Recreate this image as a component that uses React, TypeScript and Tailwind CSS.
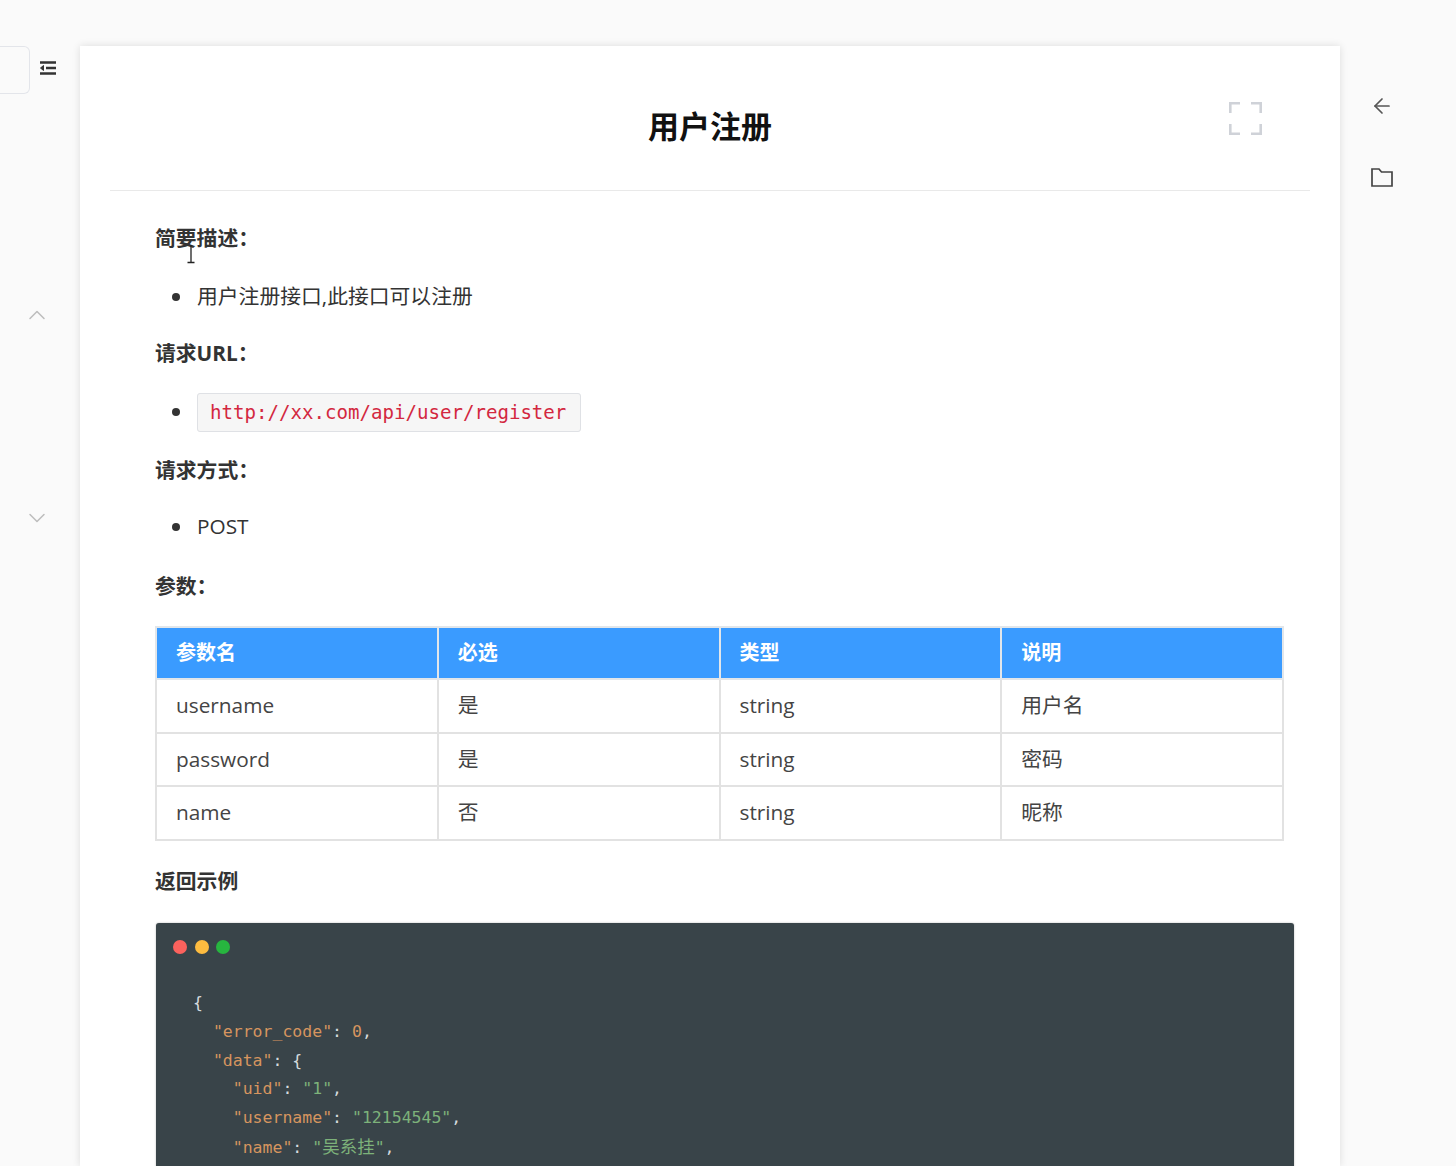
import React from 'react';
import { ArrowLeft, ChevronDown, ChevronUp } from 'lucide-react';

const bodyFont = "font-['Open_Sans','Noto_Sans_CJK_SC',sans-serif]";
const monoFont = "font-['DejaVu_Sans_Mono','Noto_Sans_CJK_SC',monospace]";

const params = [
  { name: 'username', required: '是', type: 'string', note: '用户名', height: 'h-[54px]' },
  { name: 'password', required: '是', type: 'string', note: '密码', height: 'h-[53px]' },
  { name: 'name', required: '否', type: 'string', note: '昵称', height: 'h-[54px]' },
];

const Heading = ({ children }: { children: React.ReactNode }) => (
  <p className="mb-[23px] text-[20.8px] leading-[35px] font-bold text-[#333]">{children}</p>
);

const Bullet = ({ children, className }: { children: React.ReactNode; className: string }) => (
  <ul className={`text-[20.8px] text-[#333] ${className}`}>
    <li className="flex items-center">
      <span className="mr-[17px] ml-[17px] h-[8px] w-[8px] shrink-0 rounded-full bg-[#333]" />
      <span>{children}</span>
    </li>
  </ul>
);

const Key = ({ children }: { children: React.ReactNode }) => <span className="text-[#d6955f]">{children}</span>;
const Str = ({ children }: { children: React.ReactNode }) => <span className="text-[#7db27a]">{children}</span>;

const App = () => {
  return (
    <div className={`flex h-[1166px] overflow-hidden bg-[#fafafa] ${bodyFont}`}>
      {/* left rail */}
      <aside className="flex w-[80px] shrink-0 flex-col pt-[46px]">
        <div className="flex items-start">
          <div className="h-[48px] w-[30px] rounded-r-[6px] border border-l-0 border-[#e3e5ea] bg-[#fafafa]" />
          <svg className="mt-[13px] ml-[9px] h-[18px] w-[18px]" viewBox="0 0 18 18" fill="none" stroke="#333" strokeWidth="2.6">
            <path d="M1 3.5h16M7 9h10M1 14.5h16" />
            <path d="M4.5 6.5 1.5 9l3 2.5z" fill="#333" strokeWidth="1" />
          </svg>
        </div>
        <ChevronUp className="mt-[207px] ml-[23px] h-[28px] w-[28px] text-[#bdbdbd]" strokeWidth={1.3} />
        <ChevronDown className="mt-[175px] ml-[23px] h-[28px] w-[28px] text-[#bdbdbd]" strokeWidth={1.3} />
      </aside>

      {/* document */}
      <main className="relative mt-[46px] w-[1260px] shrink-0 bg-white px-[30px] shadow-[0_0_8px_rgba(0,0,0,0.12)]">
        <header className="grid h-[145px] grid-cols-[1fr_auto_1fr] items-center border-b border-[#e9e9e9]">
          <div />
          <h1 className="mt-[17px] text-[31px] font-bold text-[#111]">用户注册</h1>
          <svg className="mr-[48px] h-[33px] w-[33px] justify-self-end" viewBox="0 0 33 33" fill="none" stroke="#cfd2d8" strokeWidth="2.6">
            <path d="M1.3 11V1.3H11M22 1.3h9.7V11M1.3 22v9.7H11M22 31.7h9.7V22" />
          </svg>
        </header>

        <section className="pl-[45px] pt-[30px]">
          <Heading>简要描述：</Heading>
          <Bullet className="mb-[22px] leading-[35px]">用户注册接口,此接口可以注册</Bullet>
          <Heading>请求URL：</Heading>
          <Bullet className="mb-[23px] leading-[34px]">
            <code className={`rounded-[3px] border border-[#dfe1e5] bg-[#f6f6f6] py-[7px] pr-[14px] pl-[12px] text-[19.1px] text-[#d3283f] ${monoFont}`}>
              http://xx.com/api/user/register
            </code>
          </Bullet>
          <Heading>请求方式：</Heading>
          <Bullet className="-mt-[2px] mb-[25px] leading-[35px]">POST</Bullet>
          <Heading>参数：</Heading>

          <table className="-mt-px mb-[23px] w-[1129px] table-fixed border-collapse text-[20.8px] text-[#444]">
            <thead>
              <tr className="h-[52px] bg-[#3a9bff] text-left text-white">
                {['参数名', '必选', '类型', '说明'].map((title) => (
                  <th key={title} className="border-2 border-[#e2e6ea] pl-[19px] text-[20px] font-bold">
                    {title}
                  </th>
                ))}
              </tr>
            </thead>
            <tbody>
              {params.map((row) => (
                <tr key={row.name} className={row.height}>
                  <td className="border-2 border-[#e2e2e2] pl-[19px]">{row.name}</td>
                  <td className="border-2 border-[#e2e2e2] pl-[19px]">{row.required}</td>
                  <td className="border-2 border-[#e2e2e2] pl-[19px]">{row.type}</td>
                  <td className="border-2 border-[#e2e2e2] pl-[19px]">{row.note}</td>
                </tr>
              ))}
            </tbody>
          </table>

          <Heading>返回示例</Heading>

          <div className="mt-[24px] ml-px h-[260px] w-[1138px] rounded-t-[3px] bg-[#394449] pt-[17px] pl-[17px] shadow-[0_0_2px_rgba(0,0,0,0.3)]">
            <div className="flex gap-[7.5px]">
              <span className="h-[14px] w-[14px] rounded-full bg-[#fc625d]" />
              <span className="h-[14px] w-[14px] rounded-full bg-[#fdbc40]" />
              <span className="h-[14px] w-[14px] rounded-full bg-[#27b53f]" />
            </div>
            <pre className={`mt-[35px] pl-[20px] text-[16.5px] leading-[28.8px] text-[#d5dbde] ${monoFont}`}>
              {'{\n'}
              {'  '}<Key>"error_code"</Key>: <Key>0</Key>,{'\n'}
              {'  '}<Key>"data"</Key>: {'{\n'}
              {'    '}<Key>"uid"</Key>: <Str>"1"</Str>,{'\n'}
              {'    '}<Key>"username"</Key>: <Str>"12154545"</Str>,{'\n'}
              {'    '}<Key>"name"</Key>: <Str>"<span className="text-[17.5px]">吴系挂</span>"</Str>,
            </pre>
          </div>
        </section>

        {/* text cursor caught in the capture */}
        <svg className="absolute left-[105px] top-[198px] h-[20px] w-[12px]" viewBox="0 0 12 20" fill="none" stroke="#222" strokeWidth="1.3">
          <path d="M6 1v17M2.5 18.5h7" />
        </svg>
      </main>

      {/* right rail */}
      <aside className="flex w-[84px] shrink-0 flex-col items-center pt-[94px]">
        <ArrowLeft className="h-[24px] w-[24px] text-[#555]" strokeWidth={1.7} />
        <svg className="mt-[47px] h-[24px] w-[24px]" viewBox="0 0 24 24" fill="none" stroke="#444" strokeWidth="1.7">
          <path d="M2 4h7l2.5 3H22v14H2z" />
        </svg>
      </aside>
    </div>
  );
};

export default App;
